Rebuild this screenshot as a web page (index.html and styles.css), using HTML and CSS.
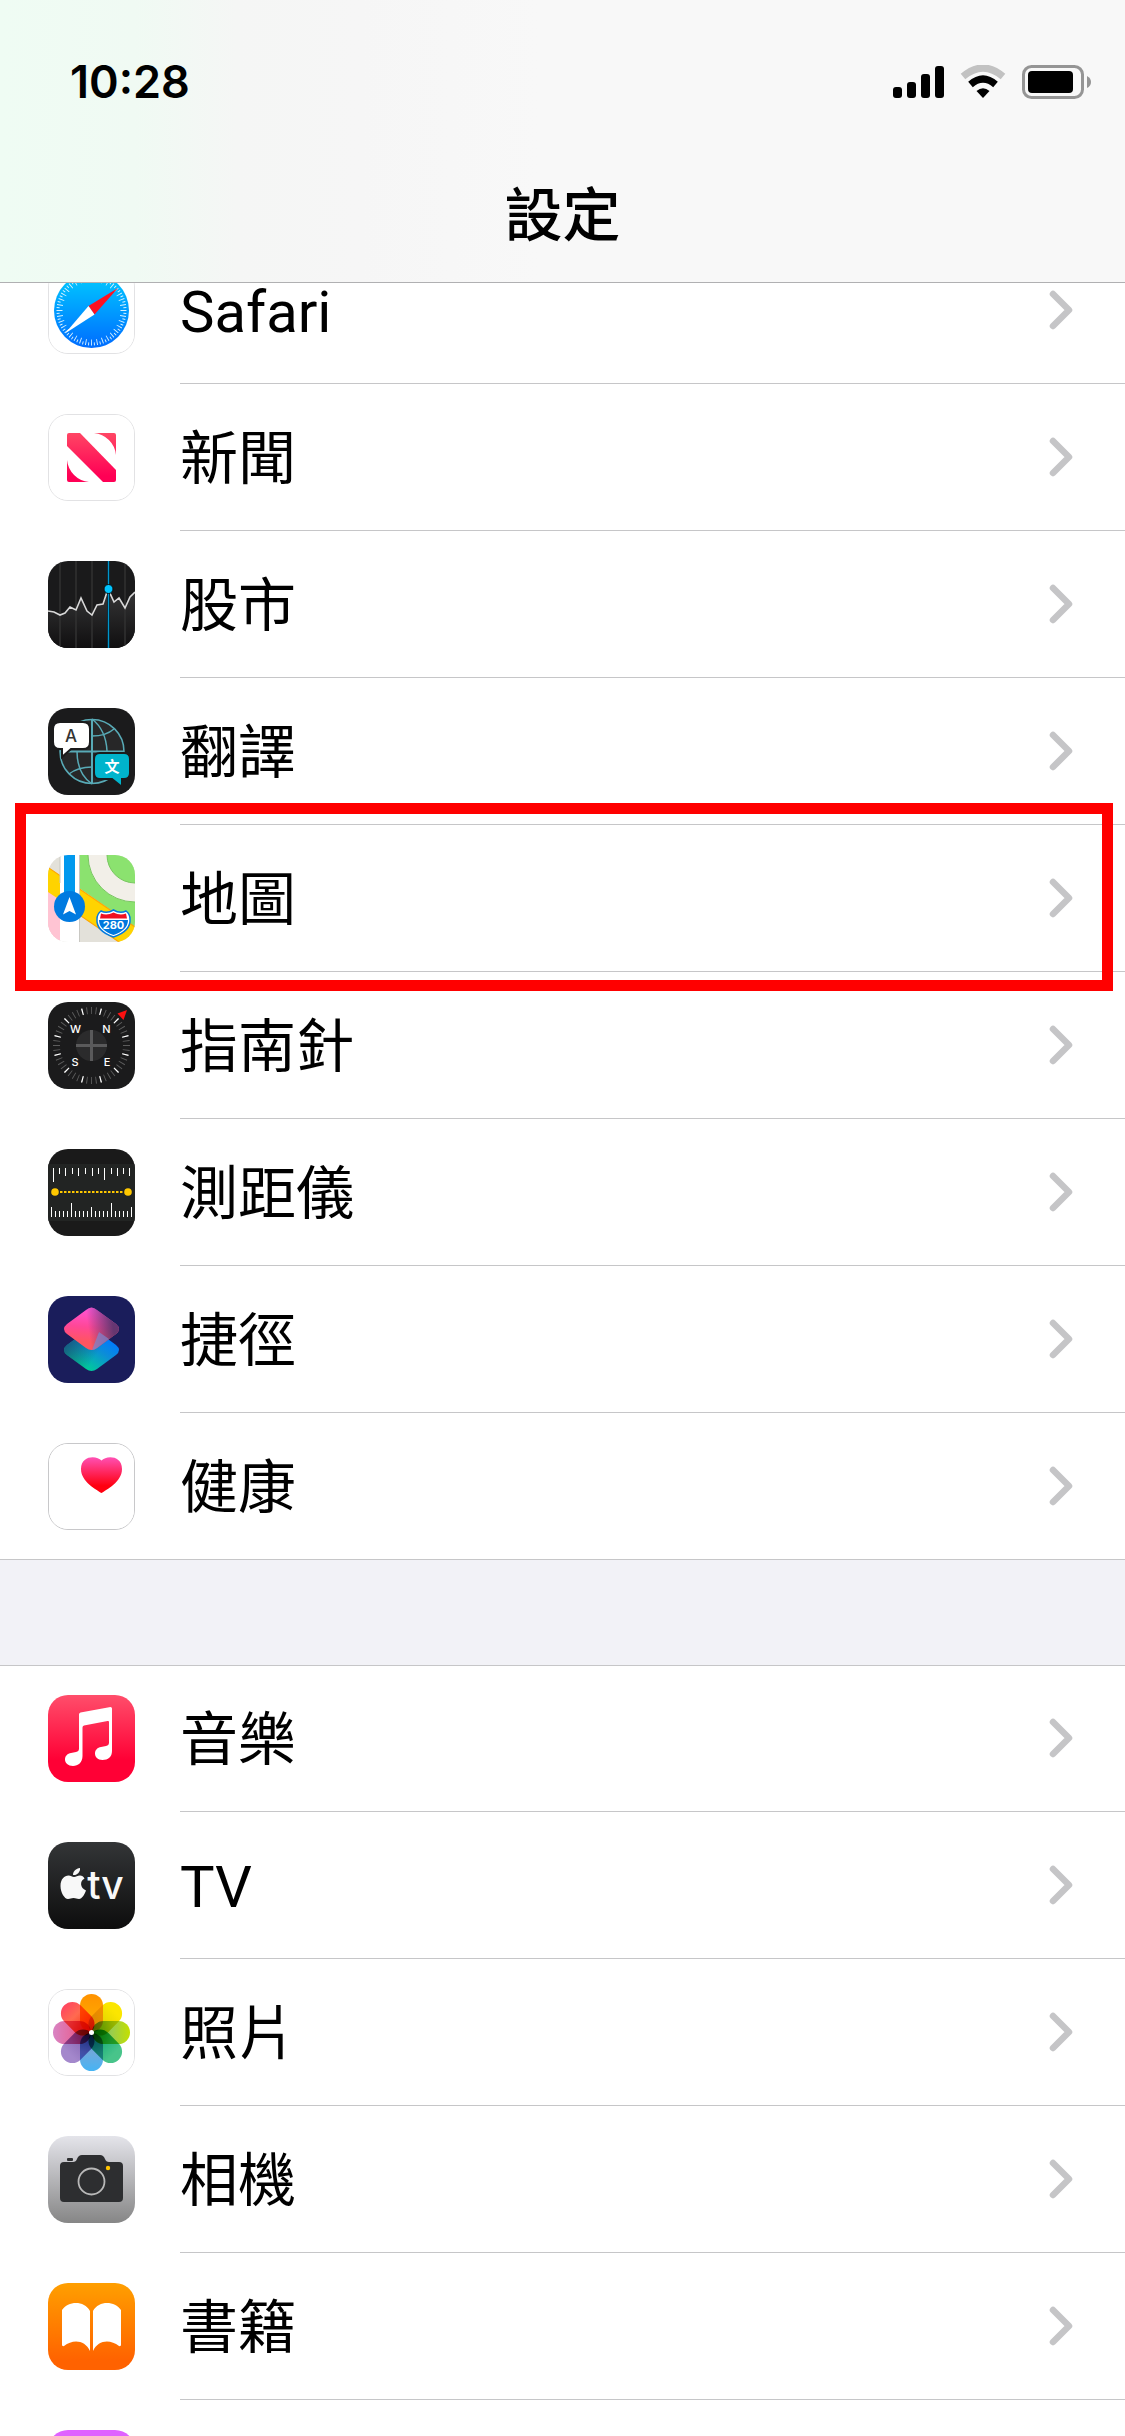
FILE: index.html
```html
<!DOCTYPE html>
<html lang="zh-Hant">
<head>
    <meta charset="UTF-8">
    <title>設定</title>
    <meta name="viewport" content="width=device-width, initial-scale=1.0">
    <link rel="stylesheet" href="styles.css">
</head>
<body>

<svg class="defs" aria-hidden="true">
    <defs>
        <symbol id="chevron" viewBox="0 0 24 40">
            <path d="M4 4 L20 20 L4 36" fill="none" stroke="#c5c5c7" stroke-width="6.5" stroke-linecap="round" stroke-linejoin="round"/>
        </symbol>
        <linearGradient id="gSafari" x1="0" y1="0" x2="0" y2="1"><stop offset="0" stop-color="#00ccff"/><stop offset="1" stop-color="#006cff"/></linearGradient>
        <linearGradient id="gNews" gradientUnits="userSpaceOnUse" x1="0" y1="19" x2="0" y2="62"><stop offset="0" stop-color="#ff4664"/><stop offset="1" stop-color="#ff0055"/></linearGradient>
        <linearGradient id="gStocks" x1="0" y1="0" x2="0" y2="1"><stop offset="0" stop-color="#363637"/><stop offset="1" stop-color="#100f10"/></linearGradient>
        <linearGradient id="gPink" x1="0.4" y1="0" x2="0.3" y2="1"><stop offset="0" stop-color="#ff55d8"/><stop offset="0.45" stop-color="#ff4797"/><stop offset="0.8" stop-color="#ff5560"/></linearGradient>
        <linearGradient id="gPinkShade" x1="0.45" y1="0.55" x2="0.9" y2="0.5"><stop offset="0" stop-color="#4a3a72" stop-opacity="0"/><stop offset="1" stop-color="#55346c" stop-opacity="0.9"/></linearGradient>
        <linearGradient id="gTeal" x1="0.9" y1="0.3" x2="0.35" y2="0.9"><stop offset="0" stop-color="#007aff"/><stop offset="0.4" stop-color="#0c8dd8"/><stop offset="1" stop-color="#00cc99"/></linearGradient>
        <linearGradient id="gTealShade" x1="0" y1="0.3" x2="0.6" y2="0.6"><stop offset="0" stop-color="#1b4678" stop-opacity="0.9"/><stop offset="1" stop-color="#1b4678" stop-opacity="0"/></linearGradient>
        <linearGradient id="gHeart" x1="0" y1="0" x2="0" y2="1"><stop offset="0" stop-color="#ff50b4"/><stop offset="0.8" stop-color="#ff0010"/></linearGradient>
        <linearGradient id="gMusic" x1="0" y1="0" x2="0" y2="1"><stop offset="0" stop-color="#ff4e6b"/><stop offset="0.75" stop-color="#ff0035"/></linearGradient>
        <linearGradient id="gTv" x1="0" y1="0" x2="0" y2="1"><stop offset="0" stop-color="#333537"/><stop offset="1" stop-color="#0d0d0d"/></linearGradient>
        <linearGradient id="gCamera" x1="0" y1="0" x2="0" y2="1"><stop offset="0" stop-color="#e4e4ea"/><stop offset="1" stop-color="#868686"/></linearGradient>
        <linearGradient id="gBooks" x1="0" y1="0" x2="0" y2="1"><stop offset="0" stop-color="#ff9f00"/><stop offset="0.9" stop-color="#ff6200"/></linearGradient>
        <!-- petals, outer end to centre -->
        <linearGradient id="p1" x1="0" y1="0" x2="0" y2="1"><stop offset="0" stop-color="#ff9200"/><stop offset="1" stop-color="#ffb400"/></linearGradient>
        <linearGradient id="p2" x1="0" y1="0" x2="0" y2="1"><stop offset="0.2" stop-color="#fbe600"/><stop offset="1" stop-color="#cfc800"/></linearGradient>
        <linearGradient id="p3" x1="0" y1="0" x2="0" y2="1"><stop offset="0" stop-color="#c4e000"/><stop offset="0.5" stop-color="#98cc50"/><stop offset="1" stop-color="#58b000"/></linearGradient>
        <linearGradient id="p4" x1="0" y1="0" x2="0" y2="1"><stop offset="0.2" stop-color="#48c48a"/><stop offset="1" stop-color="#00a070"/></linearGradient>
        <linearGradient id="p5" x1="0" y1="0" x2="0" y2="1"><stop offset="0" stop-color="#46b4f4"/><stop offset="0.5" stop-color="#70a8dc"/><stop offset="1" stop-color="#3078b8"/></linearGradient>
        <linearGradient id="p6" x1="0" y1="0" x2="0" y2="1"><stop offset="0.2" stop-color="#a488cc"/><stop offset="1" stop-color="#7a58a8"/></linearGradient>
        <linearGradient id="p7" x1="0" y1="0" x2="0" y2="1"><stop offset="0" stop-color="#d884c4"/><stop offset="0.5" stop-color="#e4689c"/><stop offset="1" stop-color="#dc3060"/></linearGradient>
        <linearGradient id="p8" x1="0" y1="0" x2="0" y2="1"><stop offset="0" stop-color="#ff4660"/><stop offset="0.4" stop-color="#ff6a50"/><stop offset="1" stop-color="#f82000"/></linearGradient>
    </defs>
</svg>

<div class="app">
    <header class="top-bar">
        <div class="status-bar">
            <span class="time">10:28</span>
            <div class="status-icons">
                <svg width="51" height="34" viewBox="0 0 51 34">
                    <rect x="0" y="22" width="9" height="11" rx="3"/>
                    <rect x="14" y="17" width="9" height="16" rx="3"/>
                    <rect x="28" y="9" width="9" height="24" rx="3"/>
                    <rect x="42" y="1" width="9" height="32" rx="3"/>
                </svg>
                <svg width="46" height="34" viewBox="0 0 46 34">
                    <path d="M3 11.5 Q23 -5.500 43 11.500" fill="none" stroke="#c2c2c2" stroke-width="7"/>
                    <path d="M10.500 19.500 Q23 8.500 35.500 19.500" fill="none" stroke="#000" stroke-width="7"/>
                    <path d="M16.500 26 Q23 20.500 29.500 26 L23 33 Z"/>
                </svg>
                <svg width="69" height="34" viewBox="0 0 69 34">
                    <rect x="1.500" y="1.500" width="59" height="31" rx="8" fill="none" stroke="#959595" stroke-width="3"/>
                    <rect x="6" y="6" width="45" height="22" rx="4"/>
                    <path d="M65 11 Q69 13 69 17 Q69 21 65 23 Z" fill="#959595"/>
                </svg>
            </div>
        </div>
        <h1 class="title">設定</h1>
    </header>

    <main class="settings">
        <div class="group">
            <a class="row" href="#">
                <svg class="icon outlined" viewBox="1 1 85 85">
                    <rect width="87" height="87" fill="#fff"/>
                    <circle cx="43.5" cy="43.5" r="37.5" fill="url(#gSafari)"/>
                    <circle cx="43.5" cy="43.5" r="32" fill="none" stroke="#d5f1ff" stroke-width="6" pathLength="360" stroke-dasharray="1.6 8.4" stroke-dashoffset="0.8"/>
                    <circle cx="43.5" cy="43.5" r="33.5" fill="none" stroke="#d5f1ff" stroke-width="3" pathLength="360" stroke-dasharray="1.6 8.4" stroke-dashoffset="-4.2"/>
                    <path d="M70 21 L40.500 39 L46.500 47.500 Z" fill="#ff1020"/>
                    <path d="M17 66.500 L40.500 39 L46.500 47.500 Z" fill="#fff"/>
                </svg>
                <span class="row-body"><span class="label">Safari</span><svg class="chevron"><use href="#chevron"/></svg></span>
            </a>
            <a class="row" href="#">
                <svg class="icon outlined" viewBox="1 1 85 85">
                    <rect width="87" height="87" fill="#fff"/>
                    <path d="M21 19 H32 L68 56 V66 Q68 68 66 68 H55 L19 32 V21 Q19 19 21 19 Z" fill="url(#gNews)"/>
                    <path d="M46 19 H66 Q68 19 68 21 V41 A24.600 24.600 0 0 0 46 19 Z" fill="url(#gNews)"/>
                    <path d="M19 46 V66 Q19 68 21 68 H41 A24.600 24.600 0 0 1 19 46 Z" fill="url(#gNews)"/>
                </svg>
                <span class="row-body"><span class="label">新聞</span><svg class="chevron"><use href="#chevron"/></svg></span>
            </a>
            <a class="row" href="#">
                <svg class="icon" viewBox="0 0 87 87">
                    <rect width="87" height="87" fill="#1a1a1b"/>
                    <path d="M0 50 L6 51 L12 54 L17 52 L22 46 L28 49 L33 37 L39 50 L44 54 L49 44 L55 43 L60 28 L66 41 L71 37 L77 47 L82 36 L87 31 V87 H0 Z" fill="url(#gStocks)"/>
                    <path d="M12 0 V87 M28 0 V87 M44 0 V87 M77 0 V87" stroke="#323232" stroke-width="1.500"/>
                    <path d="M0 50 L6 51 L12 54 L17 52 L22 46 L28 49 L33 37 L39 50 L44 54 L49 44 L55 43 L60 28 L66 41 L71 37 L77 47 L82 36 L87 31" fill="none" stroke="#d8d8d8" stroke-width="1.600"/>
                    <path d="M60.500 0 V87" stroke="#0c0c0c" stroke-width="3"/>
                    <path d="M60.500 0 V87" stroke="#0095cc" stroke-width="1.500"/>
                    <circle cx="60.500" cy="28" r="4.500" fill="#00c4ff" stroke="#0c0c0c"/>
                </svg>
                <span class="row-body"><span class="label">股市</span><svg class="chevron"><use href="#chevron"/></svg></span>
            </a>
            <a class="row" href="#">
                <svg class="icon" viewBox="0 0 87 87">
                    <rect width="87" height="87" fill="#1b1b1c"/>
                    <circle cx="44" cy="43.500" r="32" fill="#272728" stroke="#58aab6" stroke-width="1.500"/>
                    <g fill="none" stroke="#58aab6" stroke-width="1.500">
                        <path d="M44 11 V76 M12 43.500 H76" stroke-width="2"/>
                        <path d="M44 11 Q58 22 59 43 M44 28 Q58 28 66 21"/>
                        <path d="M44 76 Q29 66 29 43 M44 59 Q30 59 21 66"/>
                    </g>
                    <path d="M12 14 H35 Q42 14 42 21 V34 Q42 41 35 41 H23 L14 49 V41 H12 Q5 41 5 34 V21 Q5 14 12 14 Z" fill="#fff" stroke="#1b1b1c" stroke-width="2"/>
                    <path d="M52 45 H76 Q82 45 82 51 V65 Q82 71 76 71 H74 V79 L64 71 H52 Q46 71 46 65 V51 Q46 45 52 45 Z" fill="#00b4cc" stroke="#1b1b1c" stroke-width="2"/>
                    <text class="icon-text" x="23" y="34" font-size="17" font-weight="500" fill="#333">A</text>
                    <text class="icon-text" x="64" y="64" font-size="15" font-weight="700" fill="#fff">文</text>
                </svg>
                <span class="row-body"><span class="label">翻譯</span><svg class="chevron"><use href="#chevron"/></svg></span>
            </a>
            <a class="row highlighted" href="#">
                <svg class="icon" viewBox="0 0 87 87">
                    <rect width="87" height="87" fill="#e3e1da"/>
                    <path d="M0 36 L12 43 V87 H0 Z" fill="#ffc4d3"/>
                    <path d="M31 0 H87 V72 L31 33 Z" fill="#8be26f"/>
                    <circle cx="87" cy="0" r="37.500" fill="none" stroke="#f2efe8" stroke-width="19"/>
                    <path d="M40 0 A47 47 0 0 0 87 47 M59 0 A28 28 0 0 0 87 28" fill="none" stroke="#79c661" stroke-width="1"/>
                    <path d="M-2 11 L90 74 V100 L-2 37 Z" fill="#ffd300" stroke="#ffa600" stroke-width="1.200"/>
                    <path d="M0 37 L12 45 V87 H0 Z" fill="#ffc4d3"/>
                    <rect x="12" y="0" width="19" height="87" fill="#fff"/>
                    <path d="M12 0 V28 M31.500 0 V87" stroke="#c9c8c3" stroke-width="1"/>
                    <rect x="16" y="0" width="11" height="45" fill="#0098ee"/>
                    <circle cx="21.500" cy="51.500" r="15.500" fill="#007ae0"/>
                    <path d="M21.500 42 L28 59.500 L21.500 56 L15 59.500 Z" fill="#fff"/>
                    <path d="M53 56 Q59 59 65.500 55 Q72 59 78 56 Q82 59 82 64 Q83 76 65.500 82 Q48 76 49 64 Q49 59 53 56 Z" fill="#fff" stroke="#007ae0" stroke-width="1.500"/>
                    <path d="M52 63.500 L53 58.500 Q59 61 65.500 57.500 Q72 61 78 58.500 L79 63.500 Z" fill="#f01020"/>
                    <path d="M51 65 H80 Q80 75 65.500 80 Q51 75 51 65 Z" fill="#0078dd"/>
                    <text class="icon-text" x="65.500" y="74" font-size="11" font-weight="700" fill="#fff">280</text>
                </svg>
                <span class="row-body"><span class="label">地圖</span><svg class="chevron"><use href="#chevron"/></svg></span>
            </a>
            <a class="row" href="#">
                <svg class="icon" viewBox="0 0 87 87">
                    <rect width="87" height="87" fill="#1b1b1c"/>
                    <circle cx="43.500" cy="43.500" r="35" fill="none" stroke="#5c5c5c" stroke-width="7" pathLength="360" stroke-dasharray="1.5 6" stroke-dashoffset="0.75"/>
                    <circle cx="43.500" cy="43.500" r="35" fill="none" stroke="#fff" stroke-width="6.500" pathLength="360" stroke-dasharray="2 28" stroke-dashoffset="-14"/>
                    <circle cx="43.500" cy="43.500" r="15.500" fill="#2b2b2c"/>
                    <path d="M43.500 28 V59 M28 43.500 H59" stroke="#5a5a5b" stroke-width="3"/>
                    <path d="M69.500 11.500 L79 8 L75.500 18 Z" fill="#ff1010"/>
                    <g class="icon-text" font-size="11" font-weight="500" fill="#fff">
                        <text x="27.500" y="31">W</text>
                        <text x="58.500" y="31">N</text>
                        <text x="27" y="64">S</text>
                        <text x="59" y="64">E</text>
                    </g>
                </svg>
                <span class="row-body"><span class="label">指南針</span><svg class="chevron"><use href="#chevron"/></svg></span>
            </a>
            <a class="row" href="#">
                <svg class="icon" viewBox="0 0 87 87">
                    <rect width="87" height="87" fill="#1a1a1a"/>
                    <rect y="15" width="87" height="57" fill="#222423"/>
                    <g stroke="#fff" stroke-width="1">
                        <path d="M5.500 19 V33 M56.500 19 V31"/>
                        <path d="M17.500 19 V27 M30.500 19 V27 M44.500 19 V27 M69.500 19 V27 M81.500 19 V27"/>
                        <path d="M11.500 19 V25 M24.500 19 V25 M37.500 19 V25 M50.500 19 V25 M63.500 19 V25 M75.500 19 V25"/>
                        <path d="M3.500 58 V68 M43.500 58 V68 M83.500 58 V68 M23.500 54 V68 M63.500 54 V68"/>
                        <path d="M7.500 62 V68 M11.500 62 V68 M15.500 62 V68 M19.500 62 V68 M27.500 62 V68 M31.500 62 V68 M35.500 62 V68 M39.500 62 V68 M47.500 62 V68 M51.500 62 V68 M55.500 62 V68 M59.500 62 V68 M67.500 62 V68 M71.500 62 V68 M75.500 62 V68 M79.500 62 V68"/>
                    </g>
                    <path d="M12 43 H76" stroke="#ffc800" stroke-width="2" stroke-dasharray="2.500 1.500"/>
                    <circle cx="7" cy="43" r="3.800" fill="#ffc800"/>
                    <circle cx="80" cy="43" r="3.800" fill="#ffc800"/>
                </svg>
                <span class="row-body"><span class="label">測距儀</span><svg class="chevron"><use href="#chevron"/></svg></span>
            </a>
            <a class="row" href="#">
                <svg class="icon" viewBox="0 0 87 87">
                    <rect width="87" height="87" fill="#1a1d5b"/>
                    <path d="M38 35 Q43.500 31 49 35 L68 49 Q74 54 68 59 L49 73 Q43.500 77 38 73 L19 59 Q13 54 19 49 Z" fill="url(#gTeal)"/>
                    <path d="M38 35 Q43.500 31 49 35 L68 49 Q74 54 68 59 L49 73 Q43.500 77 38 73 L19 59 Q13 54 19 49 Z" fill="url(#gTealShade)"/>
                    <path d="M38 14 Q43.500 9 49 14 L68 28 Q74 33 68 38 L49 52 Q43.500 56 38 52 L19 38 Q13 33 19 28 Z" fill="url(#gPink)"/>
                    <path d="M38 14 Q43.500 9 49 14 L68 28 Q74 33 68 38 L49 52 Q43.500 56 38 52 L19 38 Q13 33 19 28 Z" fill="url(#gPinkShade)"/>
                    <path d="M51 36 L61 43 L49 52 Q47 54 44 54 Z" fill="#7a86d0" opacity="0.7"/>
                </svg>
                <span class="row-body"><span class="label">捷徑</span><svg class="chevron"><use href="#chevron"/></svg></span>
            </a>
            <a class="row" href="#">
                <svg class="icon outlined dark-line" viewBox="1 1 85 85">
                    <rect width="87" height="87" fill="#fff"/>
                    <path d="M53.500 17.500 C49 12.500 33 12 33 26 C33 39 49 47 53.500 50 C58 47 74 39 74 26 C74 12 58 12.500 53.500 17.500 Z" fill="url(#gHeart)"/>
                </svg>
                <span class="row-body"><span class="label">健康</span><svg class="chevron"><use href="#chevron"/></svg></span>
            </a>
        </div>

        <div class="group">
            <a class="row" href="#">
                <svg class="icon" viewBox="0 0 87 87">
                    <rect width="87" height="87" fill="url(#gMusic)"/>
                    <path d="M32.500 17.500 L62.500 12 Q64 12 64 13.500 V56 C64 62 60 65 54.500 65 C49.500 65 47 62 47 58.500 C47 55 49.500 52.500 53 52 L58 51 Q61 50.500 61 47.500 V27 Q61 25.500 59.500 26 L36 30.500 Q34.500 31 34.500 32.500 V61 C34.500 67.500 30 71 25 71 C20 71 17 68 17 64.500 C17 61 19.500 58.500 23 58 L28 57 Q31 56.500 31 53.500 V19.500 Q31 18 32.500 17.500 Z" fill="#fff"/>
                </svg>
                <span class="row-body"><span class="label">音樂</span><svg class="chevron"><use href="#chevron"/></svg></span>
            </a>
            <a class="row" href="#">
                <svg class="icon" viewBox="0 0 87 87">
                    <rect width="87" height="87" fill="url(#gTv)"/>
                    <path d="M32 26 C32.500 30 29 33.500 25 33 C25 29 28 26.500 32 26 Z" fill="#f8f8f8"/>
                    <path d="M36.500 36.500 C31.500 39 32 46 38 48.500 C36.500 52.500 34 57 31 57 C28.500 57 28 56 25.500 56 C23 56 22.500 57 20 57 C16.500 57 12.500 50.500 12.500 44 C12.500 37 16.500 33.500 20.500 33.500 C23 33.500 24 35 26 35 C28 35 29.500 33.500 32 33.500 C34 33.500 35.500 34.800 36.500 36.500 Z" fill="#f8f8f8"/>
                    <text class="icon-text tv-text" x="57.500" y="57" font-size="39" font-weight="500" fill="#f8f8f8">tv</text>
                </svg>
                <span class="row-body"><span class="label">TV</span><svg class="chevron"><use href="#chevron"/></svg></span>
            </a>
            <a class="row" href="#">
                <svg class="icon outlined petals" viewBox="1 1 85 85">
                    <rect width="87" height="87" fill="#fff"/>
                    <rect class="petal" x="32" y="5" width="23" height="38" rx="11.500" fill="url(#p1)"/>
                    <rect class="petal" x="32" y="5" width="23" height="38" rx="11.500" fill="url(#p2)" transform="rotate(45 43.500 43.500)"/>
                    <rect class="petal" x="32" y="5" width="23" height="38" rx="11.500" fill="url(#p3)" transform="rotate(90 43.500 43.500)"/>
                    <rect class="petal" x="32" y="5" width="23" height="38" rx="11.500" fill="url(#p4)" transform="rotate(135 43.500 43.500)"/>
                    <rect class="petal" x="32" y="5" width="23" height="38" rx="11.500" fill="url(#p5)" transform="rotate(180 43.500 43.500)"/>
                    <rect class="petal" x="32" y="5" width="23" height="38" rx="11.500" fill="url(#p6)" transform="rotate(225 43.500 43.500)"/>
                    <rect class="petal" x="32" y="5" width="23" height="38" rx="11.500" fill="url(#p7)" transform="rotate(270 43.500 43.500)"/>
                    <rect class="petal" x="32" y="5" width="23" height="38" rx="11.500" fill="url(#p8)" transform="rotate(315 43.500 43.500)"/>
                    <circle cx="43.500" cy="43.500" r="2.500" fill="#fff"/>
                </svg>
                <span class="row-body"><span class="label">照片</span><svg class="chevron"><use href="#chevron"/></svg></span>
            </a>
            <a class="row" href="#">
                <svg class="icon" viewBox="0 0 87 87">
                    <rect width="87" height="87" fill="url(#gCamera)"/>
                    <path d="M16 26 H25 Q28 26 29 23 Q30.500 19 34 19 H52 Q55.500 19 57 23 Q58 26 61 26 H71 Q75 26 75 30 V62 Q75 66 71 66 H16 Q12 66 12 62 V30 Q12 26 16 26 Z" fill="#2d2e30"/>
                    <rect x="19" y="22" width="6" height="3" rx="1" fill="#2d2e30"/>
                    <circle cx="43.500" cy="45.500" r="13" fill="none" stroke="#b8b8b8" stroke-width="1.800"/>
                    <circle cx="60" cy="32" r="2.200" fill="#ffc400"/>
                </svg>
                <span class="row-body"><span class="label">相機</span><svg class="chevron"><use href="#chevron"/></svg></span>
            </a>
            <a class="row" href="#">
                <svg class="icon" viewBox="0 0 87 87">
                    <rect width="87" height="87" fill="url(#gBooks)"/>
                    <path d="M14 27 C20 18 36 17 42 28 V68 C37 57 25 56 16 63 Q14 63.500 14 62 Z" fill="#fff"/>
                    <path d="M73 27 C67 18 51 17 45 28 V68 C50 57 62 56 71 63 Q73 63.500 73 62 Z" fill="#fff"/>
                </svg>
                <span class="row-body"><span class="label">書籍</span><svg class="chevron"><use href="#chevron"/></svg></span>
            </a>
            <a class="row" href="#">
                <svg class="icon" viewBox="0 0 87 87">
                    <rect width="87" height="87" fill="#df62ff"/>
                </svg>
                <span class="row-body"></span>
            </a>
        </div>
    </main>
</div>

</body>
</html>
```
FILE: styles.css
```css
* {
    box-sizing: border-box;
}
body {
    margin: 0;
    font-family: Roboto, 'Noto Sans CJK TC', sans-serif;
    background-color: #f2f2f7;
    color: #000;
}
.defs {
    position: absolute;
    width: 0;
    height: 0;
}
.app {
    height: 100vh;
    overflow: hidden;
}

/* Header */
.top-bar {
    position: fixed;
    top: 0;
    left: 0;
    right: 0;
    z-index: 10;
    padding-bottom: 26px;
    background: linear-gradient(to right, #effcf3 0%, #f0faf3 12%, #f5f6f5 21%, #f6f6f6 32%, #f8f8f8 48%, #f8f8f8 100%);
    border-bottom: 1px solid #b0b0b2;
}
.status-bar {
    display: flex;
    justify-content: space-between;
    align-items: center;
    height: 164px;
    padding: 0 34px 0 70px;
}
.time {
    font-family: Inter, sans-serif;
    font-size: 45px;
    line-height: 60px;
    font-weight: 600;
}
.status-icons {
    display: flex;
    gap: 16px;
}
.title {
    margin: 0;
    padding-top: 12px;
    font-size: 58px;
    line-height: 80px;
    font-weight: 500;
    text-align: center;
}

/* List */
.settings {
    display: flex;
    flex-direction: column;
    gap: 105px;
    padding-top: 237px;
}
.group {
    background: #fff;
    box-shadow: inset 0 1px #c6c6c8, inset 0 -1px #c6c6c8;
}
.row {
    position: relative;
    display: flex;
    align-items: center;
    gap: 45px;
    padding-left: 48px;
    color: inherit;
    text-decoration: none;
}
.row-body {
    flex: 1;
    display: flex;
    align-items: center;
    justify-content: space-between;
    height: 147px;
    padding-right: 52px;
    border-bottom: 1px solid #c6c6c8;
}
.row:last-child .row-body {
    border-bottom-color: transparent;
}
.label {
    padding-top: 3px;
    font-size: 58px;
    line-height: 80px;
}
.chevron {
    width: 24px;
    height: 40px;
}
.highlighted::after {
    content: '';
    position: absolute;
    top: -22px;
    right: 12px;
    bottom: -19px;
    left: 15px;
    z-index: 1;
    border: 11px solid #ff0000;
}

/* App icons */
.icon {
    flex: none;
    width: 87px;
    height: 87px;
    border-radius: 20px;
    overflow: hidden;
}
.outlined {
    border: 1px solid #e2e2e4;
}
.dark-line {
    border-color: #c8c8ca;
}
.icon-text {
    font-family: Inter, 'Noto Sans CJK TC', sans-serif;
    text-anchor: middle;
}
.petals {
    isolation: isolate;
}
.petal {
    mix-blend-mode: multiply;
}
```
